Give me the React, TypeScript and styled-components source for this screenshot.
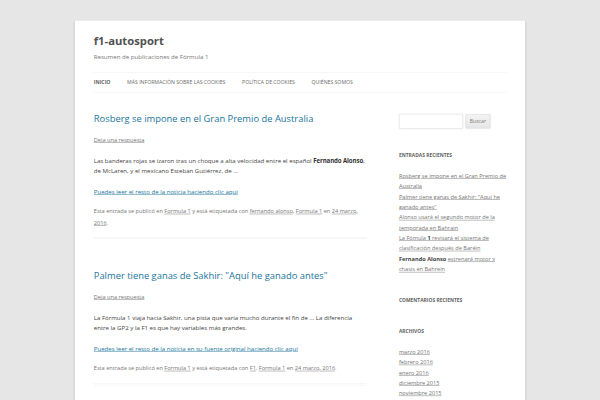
import React from "react";
import styled, { createGlobalStyle } from "styled-components";

// The reference is a 1280px wide desktop page shot down to 600px,
// so the page is laid out at desktop size and scaled as one piece.
const SCALE = 600 / 1280;

const GlobalStyle = createGlobalStyle`
  html, body {
    margin: 0;
    padding: 0;
    overflow: hidden;
    background: #e6e6e6;
  }
  body {
    font-family: "Open Sans", "Liberation Sans", sans-serif;
    color: #444;
  }
`;

const Canvas = styled.div`
  display: flow-root;
  width: 1280px;
  transform: scale(${SCALE});
  transform-origin: 0 0;
`;

const Site = styled.div`
  max-width: 880px;
  margin: 44px auto 0;
  padding: 0 40px 120px;
  background: #fff;
  box-shadow: 0 2px 6px rgba(100, 100, 100, 0.3);
`;

const Header = styled.header`
  padding-top: 29px;
`;

const SiteTitle = styled.h1`
  margin: 0 0 5.6px;
  font-size: 24px;
  line-height: 30.86px;
  font-weight: 700;
  color: #515151;
`;

const Tagline = styled.h2`
  margin: 0;
  font-size: 13px;
  line-height: 24px;
  font-weight: 400;
  color: #757575;
`;

const Nav = styled.nav`
  margin-top: 20.6px;
  border-top: 1px solid #ededed;
  border-bottom: 1px solid #ededed;
  display: flex;
  gap: 35.5px;
`;

const NavItem = styled.a<{ current?: boolean }>`
  font-size: 11px;
  line-height: 41px;
  text-transform: uppercase;
  white-space: nowrap;
  color: ${(p) => (p.current ? "#636363" : "#6a6a6a")};
  font-weight: ${(p) => (p.current ? 700 : 400)};
  text-decoration: none;
`;

const Main = styled.div`
  display: flex;
  justify-content: space-between;
  align-items: flex-start;
  margin-top: 45px;
`;

const Content = styled.main`
  width: 582px;
`;

const Article = styled.article`
  padding-bottom: 20px;
  margin-bottom: 67px;
  border-bottom: 4px double #ededed;
`;

const EntryTitle = styled.h1`
  margin: 0;
  font-size: 20px;
  line-height: 24px;
  font-weight: 400;
  color: #21759b;
`;

const CommentsLink = styled.div`
  margin-top: 20.8px;
  font-size: 12px;
  line-height: 24px;
  a {
    color: #757575;
  }
`;

const EntryContent = styled.div`
  margin-top: 19.7px;
  font-size: 13px;
  line-height: 23.5px;
  color: #444;
  p {
    margin: 0 0 19px;
  }
  strong {
    color: #333;
    letter-spacing: -0.2px;
  }
  a {
    color: #21759b;
  }
`;

const EntryMeta = styled.footer`
  font-size: 12px;
  line-height: 23.5px;
  color: #757575;
  a {
    color: #757575;
  }
`;

const Sidebar = styled.aside`
  width: 229px;
`;

const Widget = styled.section`
  margin-bottom: 42px;
`;

const SearchWidget = styled(Widget)`
  margin: 1.3px 0 44px;
`;

const SearchForm = styled.form`
  display: flex;
  align-items: center;
  gap: 5.3px;
`;

const SearchInput = styled.input`
  box-sizing: border-box;
  width: 136.5px;
  height: 31.3px;
  border: 1px solid #ccc;
  border-radius: 3px;
  padding: 6px;
  font-family: inherit;
  font-size: 13px;
`;

const SearchButton = styled.button`
  box-sizing: border-box;
  width: 53.3px;
  height: 30px;
  padding: 0;
  font-family: inherit;
  font-size: 11px;
  color: #7c7c7c;
  background: linear-gradient(to bottom, #f4f4f4, #e6e6e6);
  border: 1px solid #d2d2d2;
  border-radius: 3px;
  box-shadow: 0 1px 2px rgba(64, 64, 64, 0.1);
`;

const WidgetTitle = styled.h3`
  margin: 0;
  font-size: 10.5px;
  line-height: 24px;
  font-weight: 700;
  text-transform: uppercase;
  color: #636363;
`;

const WidgetList = styled.ul`
  list-style: none;
  margin: 21.7px 0 0;
  padding: 0;
  li {
    font-size: 12px;
    line-height: 22.15px;
    color: #444;
  }
  a {
    color: #757575;
  }
  strong {
    color: #444;
  }
`;

type Post = {
  title: string;
  body: React.ReactNode;
  more: string;
  tags: string[];
};

const posts: Post[] = [
  {
    title: "Rosberg se impone en el Gran Premio de Australia",
    body: (
      <>
        Las banderas rojas se izaron tras un choque a alta velocidad entre el
        español <strong>Fernando Alonso</strong>, de McLaren, y el mexicano
        Esteban Gutiérrez, de …
      </>
    ),
    more: "Puedes leer el resto de la noticia haciendo clic aquí",
    tags: ["fernando alonso", "Formula 1"],
  },
  {
    title: "Palmer tiene ganas de Sakhir: \"Aquí he ganado antes\"",
    body: (
      <>
        La Fórmula 1 viaja hacia Sakhir, una pista que varía mucho durante el
        fin de … La diferencia entre la GP2 y la F1 es que hay variables más
        grandes.
      </>
    ),
    more: "Puedes leer el resto de la noticia en su fuente original haciendo clic aquí",
    tags: ["F1", "Formula 1"],
  },
];

const archives = [
  "marzo 2016",
  "febrero 2016",
  "enero 2016",
  "diciembre 2015",
  "noviembre 2015",
  "octubre 2015",
];

export default function App() {
  return (
    <>
      <GlobalStyle />
      <Canvas>
        <Site>
          <Header>
            <SiteTitle>f1-autosport</SiteTitle>
            <Tagline>Resumen de publicaciones de Fórmula 1</Tagline>
            <Nav>
              <NavItem current>Inicio</NavItem>
              <NavItem>Más información sobre las cookies</NavItem>
              <NavItem>Política de cookies</NavItem>
              <NavItem>Quiénes somos</NavItem>
            </Nav>
          </Header>
          <Main>
            <Content>
              {posts.map((post) => (
                <Article key={post.title}>
                  <EntryTitle>{post.title}</EntryTitle>
                  <CommentsLink>
                    <a href="#">Deja una respuesta</a>
                  </CommentsLink>
                  <EntryContent>
                    <p>{post.body}</p>
                    <p>
                      <a href="#">{post.more}</a>
                    </p>
                  </EntryContent>
                  <EntryMeta>
                    Esta entrada se publicó en <a href="#">Formula 1</a> y está
                    etiquetada con{" "}
                    {post.tags.map((t, i) => (
                      <React.Fragment key={t}>
                        <a href="#">{t}</a>
                        {i < post.tags.length - 1 ? ", " : ""}
                      </React.Fragment>
                    ))}{" "}
                    en <a href="#">24 marzo, 2016</a>.
                  </EntryMeta>
                </Article>
              ))}
            </Content>
            <Sidebar>
              <SearchWidget>
                <SearchForm onSubmit={(e) => e.preventDefault()}>
                  <SearchInput type="text" />
                  <SearchButton type="submit">Buscar</SearchButton>
                </SearchForm>
              </SearchWidget>
              <Widget>
                <WidgetTitle>Entradas recientes</WidgetTitle>
                <WidgetList>
                  <li>
                    <a href="#">Rosberg se impone en el Gran Premio de Australia</a>
                  </li>
                  <li>
                    <a href="#">Palmer tiene ganas de Sakhir: "Aquí he ganado antes"</a>
                  </li>
                  <li>
                    <a href="#">Alonso usará el segundo motor de la temporada en Bahrain</a>
                  </li>
                  <li>
                    <a href="#">
                      La Fómula <strong>1</strong> revisará el sistema de
                      clasificación después de Baréin
                    </a>
                  </li>
                  <li>
                    <strong>Fernando Alonso</strong>{" "}
                    <a href="#">estrenará motor y chasis en Bahrein</a>
                  </li>
                </WidgetList>
              </Widget>
              <Widget>
                <WidgetTitle>Comentarios recientes</WidgetTitle>
              </Widget>
              <Widget>
                <WidgetTitle>Archivos</WidgetTitle>
                <WidgetList>
                  {archives.map((a) => (
                    <li key={a}>
                      <a href="#">{a}</a>
                    </li>
                  ))}
                </WidgetList>
              </Widget>
            </Sidebar>
          </Main>
        </Site>
      </Canvas>
    </>
  );
}
